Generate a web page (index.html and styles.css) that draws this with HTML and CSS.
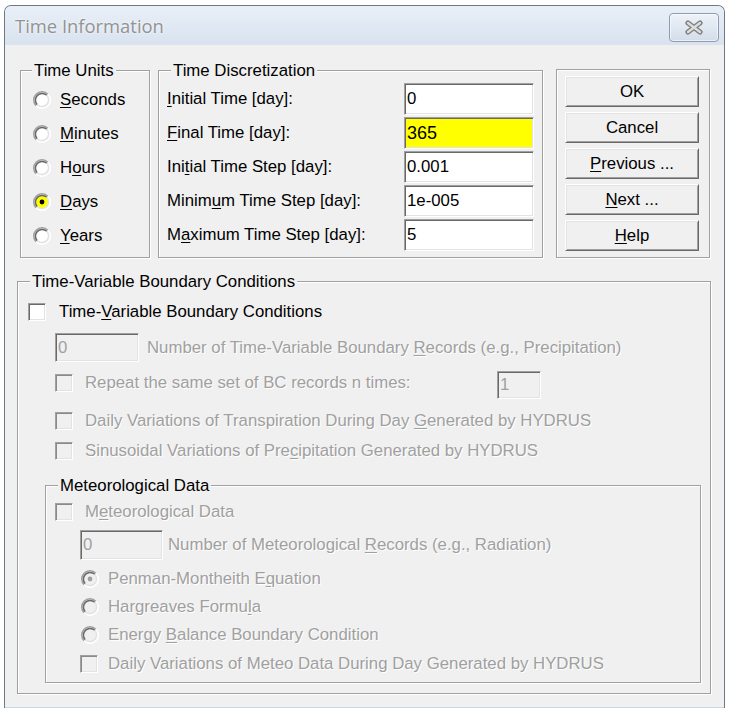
FILE: index.html
```html
<!DOCTYPE html>
<html>
<head>
<meta charset="utf-8">
<title>Time Information</title>
<link rel="stylesheet" href="styles.css">
</head>
<body>
<svg class="defs" width="0" height="0" aria-hidden="true">
  <defs>
    <symbol id="rd" viewBox="0 0 12 12">
      <circle cx="6" cy="6" r="4.2" fill="currentColor"/>
      <path d="M2.11 9.89 A5.5 5.5 0 0 1 9.89 2.11" fill="none" stroke="#a0a0a0"/>
      <path d="M9.89 2.11 A5.5 5.5 0 0 1 2.11 9.89" fill="none" stroke="#ffffff"/>
      <path d="M2.82 9.18 A4.5 4.5 0 0 1 9.18 2.82" fill="none" stroke="#696969"/>
      <path d="M9.18 2.82 A4.5 4.5 0 0 1 2.82 9.18" fill="none" stroke="#e3e3e3"/>
    </symbol>
  </defs>
</svg>
<div class="window">
  <div class="titlebar">
    <span class="title">Time Information</span>
    <span class="close">
      <svg width="22" height="15" viewBox="0 0 22 15">
        <path d="M5 3 L17 12 M17 3 L5 12" stroke="#7f7f7f" stroke-width="5.2" stroke-linecap="round"/>
        <path d="M5 3 L17 12 M17 3 L5 12" stroke="#dcdcdc" stroke-width="2.4" stroke-linecap="round"/>
      </svg>
    </span>
  </div>
  <div class="client">
    <div class="top-row">
      <fieldset class="group units">
        <legend>Time Units</legend>
        <div class="opt"><svg class="radio"><use href="#rd"/></svg><span><u>S</u>econds</span></div>
        <div class="opt"><svg class="radio"><use href="#rd"/></svg><span><u>M</u>inutes</span></div>
        <div class="opt"><svg class="radio"><use href="#rd"/></svg><span>H<u>o</u>urs</span></div>
        <div class="opt"><svg class="radio sel" viewBox="0 0 12 12"><use href="#rd"/><circle cx="6" cy="6" r="1.6" fill="#000"/></svg><span><u>D</u>ays</span></div>
        <div class="opt"><svg class="radio"><use href="#rd"/></svg><span><u>Y</u>ears</span></div>
      </fieldset>
      <fieldset class="group disc">
        <legend>Time Discretization</legend>
        <div class="frow"><span class="flabel"><u>I</u>nitial Time [day]:</span><span class="edit">0</span></div>
        <div class="frow"><span class="flabel"><u>F</u>inal Time [day]:</span><span class="edit hl">365</span></div>
        <div class="frow"><span class="flabel">Ini<u>t</u>ial Time Step [day]:</span><span class="edit">0.001</span></div>
        <div class="frow"><span class="flabel">Minim<u>u</u>m Time Step [day]:</span><span class="edit">1e-005</span></div>
        <div class="frow"><span class="flabel">M<u>a</u>ximum Time Step [day]:</span><span class="edit">5</span></div>
      </fieldset>
      <div class="group buttons">
        <button class="btn">OK</button>
        <button class="btn">Cancel</button>
        <button class="btn"><u>P</u>revious ...</button>
        <button class="btn"><u>N</u>ext ...</button>
        <button class="btn"><u>H</u>elp</button>
      </div>
    </div>

    <fieldset class="group bc">
      <legend>Time-Variable Boundary Conditions</legend>
      <div class="row r-tvbc"><span class="cb"></span><span class="lbl-tvbc">Time-<u>V</u>ariable Boundary Conditions</span></div>
      <div class="row r-num"><span class="edit dis e-num">0</span><span class="dtext">Number of Time-Variable Boundary <u>R</u>ecords (e.g., Precipitation)</span></div>
      <div class="row r-rep">
        <div class="cbpart"><span class="cb dis"></span><span class="dtext rep-lbl">Repeat the same set of BC records n times:</span></div>
        <span class="edit dis e-rep">1</span>
      </div>
      <div class="row r-chk"><span class="cb dis"></span><span class="dtext">Daily Variations of Transpiration During Day <u>G</u>enerated by HYDRUS</span></div>
      <div class="row r-chk"><span class="cb dis"></span><span class="dtext">Sinusoidal Variations of Pre<u>c</u>ipitation Generated by HYDRUS</span></div>

      <fieldset class="group met">
        <legend>Meteorological Data</legend>
        <div class="row m-cb"><span class="cb dis"></span><span class="dtext">M<u>e</u>teorological Data</span></div>
        <div class="row m-num"><span class="edit dis e-mnum">0</span><span class="dtext">Number of Meteorological <u>R</u>ecords (e.g., Radiation)</span></div>
        <div class="row m-rad"><svg class="radio dr" viewBox="0 0 12 12"><use href="#rd"/><circle cx="6" cy="6" r="1.6" fill="#a0a0a0"/></svg><span class="dtext">Penman-Montheith E<u>q</u>uation</span></div>
        <div class="row m-rad"><svg class="radio dr"><use href="#rd"/></svg><span class="dtext">Hargreaves Formu<u>l</u>a</span></div>
        <div class="row m-rad"><svg class="radio dr"><use href="#rd"/></svg><span class="dtext">Energy <u>B</u>alance Boundary Condition</span></div>
        <div class="row m-last"><span class="cb dis"></span><span class="dtext">Daily Variations of Meteo Data During Day Generated by HYDRUS</span></div>
      </fieldset>
    </fieldset>
  </div>
</div>
</body>
</html>
```

FILE: styles.css
```css
* { box-sizing: border-box; }
html, body { margin: 0; padding: 0; background: #ffffff; }
body {
  font-family: "Liberation Sans", Arial, sans-serif;
  font-size: 16.8px;
  color: #000;
}
.defs { position: absolute; width: 0; height: 0; overflow: hidden; }
u { text-decoration-thickness: 1px; text-underline-offset: 2px; }

.window {
  margin: 5px 0 0 4px;
  width: 721px;
  border: 1px solid #6f7884;
  border-bottom: 0;
  border-radius: 7px 7px 0 0;
  overflow: hidden;
  background: #dbe5f0;
}
.titlebar {
  height: 39px;
  display: flex;
  justify-content: space-between;
  align-items: flex-start;
  padding: 0 5px 0 10px;
  background: linear-gradient(to bottom, #e9eff7, #d8e3ef);
}
.title {
  font-family: "Open Sans", "Noto Sans", sans-serif;
  font-size: 18.4px;
  line-height: 18px;
  color: #939393;
  margin-top: 11px;
  text-shadow: 0 0 3px rgba(255,255,255,0.9);
}
.close {
  margin-top: 7px;
  width: 50px;
  height: 29px;
  border: 1px solid #8e9db1;
  border-radius: 4px;
  background: linear-gradient(to bottom, #eef3f9, #d3dde9);
  box-shadow: inset 0 0 0 1px rgba(255,255,255,0.55);
  display: flex;
  align-items: center;
  justify-content: center;
}

.client {
  background: #f0f0f0;
  height: 663px;
  padding-top: 16px;
  border-bottom: 1px solid #c9d7e7;
}

.group {
  margin: 0;
  padding: 0;
  min-width: 0;
  border: 1px solid #a0a0a0;
  box-shadow: 1px 1px 0 #ffffff, inset 1px 1px 0 #ffffff;
}
.group > legend {
  margin-left: 11px;
  padding: 0 2px;
  line-height: 19px;
  background: #f0f0f0;
}

.top-row {
  display: flex;
  align-items: flex-start;
  margin-left: 15px;
}
.units { width: 130px; height: 197px; }
.disc { width: 385px; height: 197px; margin-left: 8px; }
.disc > legend { margin-left: 12px; }
.buttons {
  width: 154px;
  height: 189px;
  margin-top: 8px;
  margin-left: 13px;
  padding: 6px 0 0 8px;
  display: flex;
  flex-direction: column;
  gap: 5px;
}

.opt {
  height: 34px;
  display: flex;
  align-items: center;
  padding-left: 12px;
}
.units > legend + .opt { margin-top: 3px; }
.radio {
  width: 18px;
  height: 18px;
  flex: none;
  margin-right: 9px;
  color: #ffffff;
}
.radio.sel { color: #ffff00; }

.frow {
  height: 34px;
  display: flex;
  align-items: center;
  padding: 0 8px 0 8px;
}
.disc > legend + .frow { margin-top: 2px; }
.flabel { flex: 1; }

.edit {
  display: flex;
  align-items: center;
  padding-left: 2px;
  background: #ffffff;
  border: 1px solid;
  border-color: #a0a0a0 #ffffff #ffffff #a0a0a0;
  box-shadow: inset 1px 1px 0 #696969, inset -1px -1px 0 #e3e3e3;
  flex: none;
}
.frow .edit { width: 130px; height: 32px; }
.edit.hl { background: #ffff00; font-size: 18px; }
.edit.dis { background: #f0f0f0; color: #a0a0a0; }

.btn {
  width: 134px;
  height: 31px;
  padding: 0;
  font: inherit;
  color: #000;
  background: #f0f0f0;
  border: 1px solid;
  border-color: #ffffff #696969 #696969 #ffffff;
  box-shadow: inset 1px 1px 0 #e3e3e3, inset -1px -1px 0 #a0a0a0;
  text-align: center;
}

.bc {
  margin: 14px 0 0 12px;
  width: 694px;
  height: 422px;
}
.bc > legend { margin-left: 12px; }
.row { display: flex; align-items: center; }

.cb {
  width: 18px;
  height: 18px;
  flex: none;
  background: #ffffff;
  border: 1px solid;
  border-color: #a0a0a0 #ffffff #ffffff #a0a0a0;
  box-shadow: inset 1px 1px 0 #696969, inset -1px -1px 0 #e3e3e3;
}
.cb.dis { background: #f0f0f0; box-shadow: inset 1px 1px 0 #8a8a8a, inset -1px -1px 0 #e3e3e3; }
.dtext { color: #a0a0a0; text-shadow: 1px 1px 0 #ffffff; white-space: nowrap; }

.r-tvbc { height: 30px; margin-top: 6px; padding-left: 10px; }
.lbl-tvbc { margin-left: 13px; }
.r-num { height: 29px; margin-top: 6px; padding-left: 37px; }
.e-num { width: 84px; height: 29px; margin-right: 8px; }
.r-rep { height: 28px; margin-top: 9px; padding-left: 37px; align-items: flex-start; }
.cbpart { display: flex; align-items: center; height: 23px; }
.rep-lbl { width: 412px; margin-left: 12px; }
.e-rep { width: 44px; height: 28px; }
.r-chk { height: 30px; padding-left: 37px; }
.r-rep + .r-chk { margin-top: 7px; }
.r-chk .cb + .dtext { margin-left: 12px; }

.met {
  margin: 10px 0 0 27px;
  width: 656px;
  height: 207px;
}
.met > legend { margin-left: 12px; color: #000; }
.m-cb { height: 30px; margin-top: 2px; padding-left: 9px; }
.m-cb .cb { margin-right: 12px; }
.m-num { height: 30px; margin-top: 3px; padding-left: 34px; }
.e-mnum { width: 83px; height: 30px; margin-right: 5px; }
.m-rad { height: 28px; padding-left: 35px; }
.m-num + .m-rad { margin-top: 5px; }
.radio.dr { color: #f0f0f0; }
.m-last { height: 29px; padding-left: 34px; }
.m-last .cb { margin-right: 10px; }
```
